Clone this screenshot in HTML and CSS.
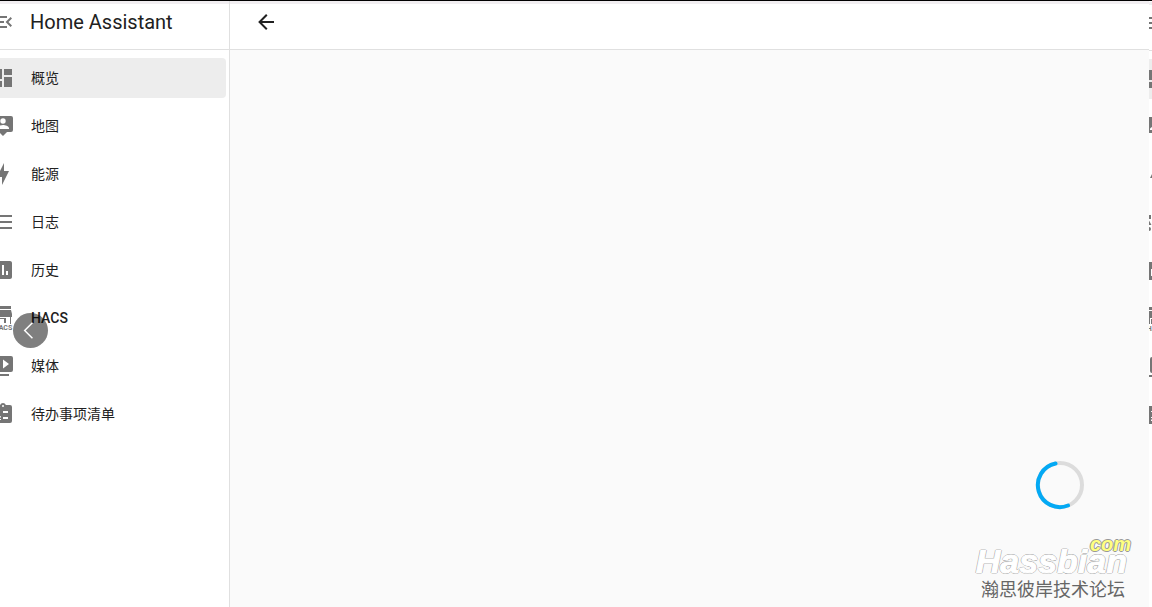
FILE: index.html
```
<!DOCTYPE html>
<html lang="zh-CN">
<head>
    <meta charset="UTF-8">
    <meta name="viewport" content="width=device-width, initial-scale=1.0">
    <title>Home Assistant</title>
    <link rel="stylesheet" href="styles.css">
</head>
<body>
    <!-- Shared icons -->
    <svg class="sprite" aria-hidden="true">
        <symbol id="menu-open" viewBox="0 0 24 24"><path d="M21,15.61L19.59,17L14.58,12L19.59,7L21,8.39L17.44,12L21,15.61M3,6H16V8H3V6M3,13V11H13V13H3M3,18V16H16V18H3Z"/></symbol>
        <symbol id="arrow-left" viewBox="0 0 24 24"><path d="M20,11V13H8L13.5,18.5L12.08,19.92L4.16,12L12.08,4.08L13.5,5.5L8,11H20Z"/></symbol>
        <symbol id="dashboard" viewBox="0 0 24 24"><path d="M13,3V9H21V3M13,21H21V11H13M3,21H11V15H3M3,13H11V3H3V13Z"/></symbol>
        <symbol id="map" viewBox="0 0 24 24"><path d="M20,2H4A2,2 0 0,0 2,4V16A2,2 0 0,0 4,18H8L12,22L16,18H20A2,2 0 0,0 22,16V4A2,2 0 0,0 20,2M12,4.3A2.7,2.7 0 0,1 14.7,7A2.7,2.7 0 0,1 12,9.7A2.7,2.7 0 0,1 9.3,7A2.7,2.7 0 0,1 12,4.3M18,15H6V14.1C6,12.1 10,11 12,11C14,11 18,12.1 18,14.1V15Z"/></symbol>
        <symbol id="energy" viewBox="0 0 24 24"><path d="M11 15H6L13 1V9H18L11 23V15Z"/></symbol>
        <symbol id="logbook" viewBox="0 0 24 24"><path d="M5,9.5L7.5,14H2.5L5,9.5M3,4H7V8H3V4M5,20A2,2 0 0,0 7,18A2,2 0 0,0 5,16A2,2 0 0,0 3,18A2,2 0 0,0 5,20M9,5V7H21V5H9M9,19H21V17H9V19M9,13H21V11H9V13Z"/></symbol>
        <symbol id="history" viewBox="0 0 24 24"><path d="M19,3H5C3.9,3 3,3.9 3,5V19C3,20.1 3.9,21 5,21H19C20.1,21 21,20.1 21,19V5C21,3.9 20.1,3 19,3M9,17H7V10H9V17M13,17H11V7H13V17M17,17H15V13H17V17Z"/></symbol>
        <symbol id="hacs" viewBox="0 0 24 24">
            <path d="M4,0H20V3H4V0M4,4H20L21,8V11H3V8L4,4M4,11H6V17H4V11M7,12H15V17H13V13H9V17H7V12M19,11H20V18H19V11Z"/>
            <text class="hacs-text" x="12" y="24" text-anchor="middle">HACS</text>
        </symbol>
        <symbol id="media" viewBox="0 0 24 24"><path d="M4,6H2V20A2,2 0 0,0 4,22H18V20H4V6M20,2H8A2,2 0 0,0 6,4V16A2,2 0 0,0 8,18H20A2,2 0 0,0 22,16V4A2,2 0 0,0 20,2M12,14.5V5.5L18,10L12,14.5Z"/></symbol>
        <symbol id="todo" viewBox="0 0 24 24"><path fill-rule="evenodd" d="M19,3H14.82C14.4,1.84 13.3,1 12,1C10.7,1 9.6,1.84 9.18,3H5A2,2 0 0,0 3,5V19A2,2 0 0,0 5,21H19A2,2 0 0,0 21,19V5A2,2 0 0,0 19,3M12,3A1,1 0 0,1 13,4A1,1 0 0,1 12,5A1,1 0 0,1 11,4A1,1 0 0,1 12,3M7,8H9V12H8V9H7V8M10,17V18H7V17.08L9,15H7V14H9.25A0.75,0.75 0 0,1 9.79,15.27L8.12,17H10M17,17H12V15H17V17M17,11H12V9H17V11Z"/></symbol>
    </svg>

    <div class="app">
        <nav class="sidebar">
            <div class="bar">
                <button class="icon-button" aria-label="折叠侧边栏"><svg class="icon"><use href="#menu-open"/></svg></button>
                <span class="title">Home Assistant</span>
            </div>
            <div class="menu">
                <a class="item selected" href="#"><svg class="icon"><use href="#dashboard"/></svg>概览</a>
                <a class="item" href="#"><svg class="icon"><use href="#map"/></svg>地图</a>
                <a class="item" href="#"><svg class="icon"><use href="#energy"/></svg>能源</a>
                <a class="item" href="#"><svg class="icon"><use href="#logbook"/></svg>日志</a>
                <a class="item" href="#"><svg class="icon"><use href="#history"/></svg>历史</a>
                <a class="item latin" href="#"><svg class="icon"><use href="#hacs"/></svg>HACS</a>
                <a class="item" href="#"><svg class="icon"><use href="#media"/></svg>媒体</a>
                <a class="item" href="#"><svg class="icon"><use href="#todo"/></svg>待办事项清单</a>
            </div>
            <button class="back-bubble" aria-label="后退">
                <svg width="35" height="35" viewBox="0 0 36 36"><path d="M20 10L12 18L20 26"/></svg>
            </button>
        </nav>

        <main class="content">
            <header class="bar">
                <button class="icon-button back" aria-label="返回"><svg class="icon"><use href="#arrow-left"/></svg></button>
            </header>
            <div class="view">
                <svg class="spinner" viewBox="0 0 48 48" role="img" aria-label="加载中">
                    <circle class="track" cx="24" cy="24" r="22"/>
                    <path class="arc" d="M19.5 2.5A22 22 0 1 0 32 44.5"/>
                </svg>
                <div class="brand">
                    <span class="brand-com">com</span>
                    <span class="brand-name">Hassbian</span>
                    <span class="brand-sub">瀚思彼岸技术论坛</span>
                </div>
            </div>
        </main>

        <!-- Edge of the next panel -->
        <div class="next-panel" aria-hidden="true">
            <div class="bar"><svg class="icon"><use href="#menu-open"/></svg></div>
            <div class="menu">
                <div class="item selected"><svg class="icon"><use href="#dashboard"/></svg></div>
                <div class="item"><svg class="icon"><use href="#map"/></svg></div>
                <div class="item"><svg class="icon"><use href="#energy"/></svg></div>
                <div class="item"><svg class="icon"><use href="#logbook"/></svg></div>
                <div class="item"><svg class="icon"><use href="#history"/></svg></div>
                <div class="item"><svg class="icon"><use href="#hacs"/></svg></div>
                <div class="item"><svg class="icon"><use href="#media"/></svg></div>
                <div class="item"><svg class="icon"><use href="#todo"/></svg></div>
            </div>
        </div>
    </div>
</body>
</html>
```
FILE: styles.css
```
* {
    box-sizing: border-box;
}

body {
    margin: 0;
    font-family: Roboto, "Noto Sans CJK SC", sans-serif;
    font-size: 14px;
    color: #212121;
    background-color: #fff;
}

button {
    padding: 0;
    border: none;
    background: none;
    color: inherit;
    cursor: pointer;
}

.sprite {
    display: none;
}

.app {
    display: flex;
    height: 100vh;
    border-top: 1px solid #000;
    overflow: hidden;
}

.bar {
    display: flex;
    align-items: center;
    height: 49px;
    padding-bottom: 10px;
    border-top: 3px solid #f1eef1;
    border-bottom: 1px solid #e0e0e0;
    background-color: #fff;
}

.icon {
    display: block;
    flex: none;
    width: 24px;
    height: 24px;
    fill: #757575;
}

.hacs-text {
    font-family: Roboto, sans-serif;
    font-size: 7px;
    font-weight: 700;
}

/* Sidebar */
.sidebar {
    position: relative;
    flex: none;
    width: 230px;
    border-right: 1px solid #e0e0e0;
    overflow: hidden;
}

.sidebar .icon {
    margin-left: -9px;
}

.title {
    margin-left: 15px;
    font-size: 20px;
    line-height: 24px;
}

.menu {
    display: flex;
    flex-direction: column;
    gap: 8px;
    padding: 8px 3px 0 0;
}

.item {
    display: flex;
    align-items: center;
    gap: 16px;
    height: 40px;
    padding-bottom: 1px;
    border-radius: 0 4px 4px 0;
    line-height: 20px;
    color: #212121;
    text-decoration: none;
}

.latin {
    font-weight: 500;
}

.selected {
    background-color: #ededed;
}

.back-bubble {
    position: absolute;
    left: 13px;
    top: 312px;
    width: 35px;
    height: 35px;
    border-radius: 50%;
    background-color: rgba(0, 0, 0, 0.5);
}

.back-bubble svg {
    display: block;
    fill: none;
    stroke: #fff;
    stroke-width: 1.5;
}

/* Main area */
.content {
    display: flex;
    flex-direction: column;
    flex: 1;
    min-width: 0;
}

.back {
    margin-left: 24px;
}

.back .icon {
    fill: #212121;
}

.view {
    display: flex;
    flex: 1;
    flex-direction: column;
    align-items: flex-end;
    justify-content: flex-end;
    gap: 29px;
    padding: 0 18px 3px 0;
    background-color: #fafafa;
}

.spinner {
    width: 48px;
    height: 48px;
    margin-right: 47px;
    overflow: visible;
    fill: none;
    stroke-width: 4;
}

.track {
    stroke: #dcdcdc;
}

.arc {
    stroke: #03a9f4;
    stroke-linecap: round;
}

/* Watermark */
.brand {
    display: flex;
    flex-direction: column;
    align-items: flex-end;
    color: #666;
}

.brand-name,
.brand-com {
    font-family: "Liberation Sans", Arial, sans-serif;
    font-weight: 700;
    font-style: italic;
    text-shadow: 1px 0 #999, -1px 0 #999, 0 1px #999, 0 -1px #999;
}

.brand-name {
    padding-right: 4px;
    font-size: 34px;
    line-height: 30px;
    color: #fff;
    -webkit-text-stroke: 1px #fff;
}

.brand-com {
    position: relative;
    z-index: 1;
    margin-bottom: -4px;
    font-size: 20px;
    line-height: 12px;
    color: #ffff80;
}

.brand-sub {
    padding-right: 6px;
    font-size: 18px;
    line-height: 28px;
}

/* Next panel */
.next-panel {
    flex: none;
    width: 3px;
    padding-top: 1px;
    background-color: #fff;
    overflow: hidden;
}

.next-panel .menu {
    padding-right: 0;
}

.next-panel .item {
    border-radius: 0;
}

.next-panel .icon {
    margin-left: -5px;
}
```
